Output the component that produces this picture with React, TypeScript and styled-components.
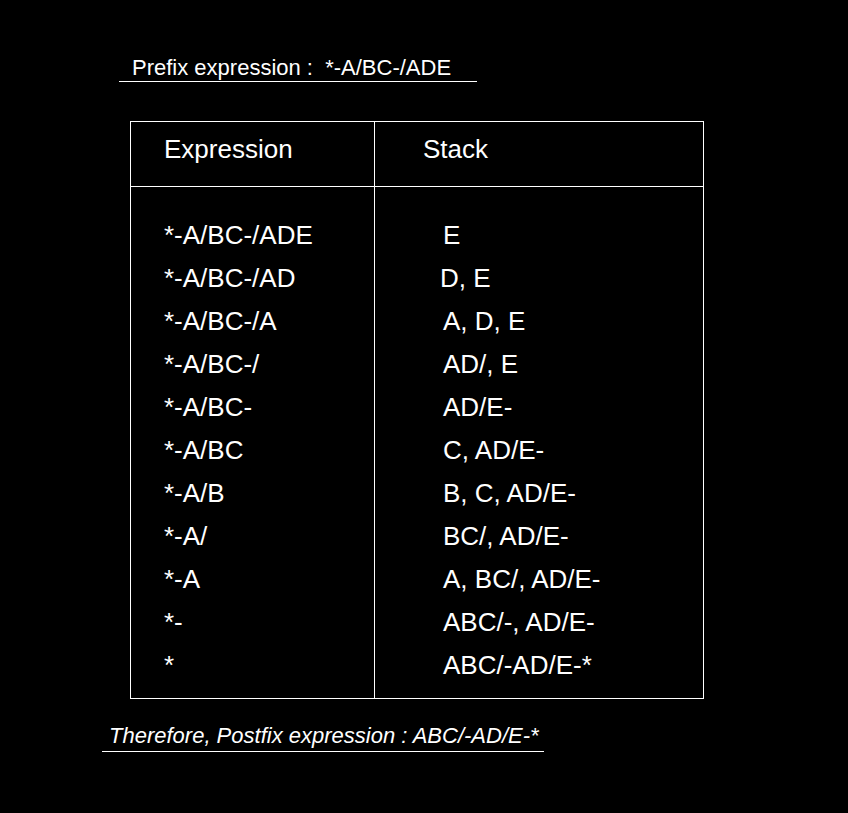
import React from "react";
import styled, { createGlobalStyle } from "styled-components";

const GlobalStyle = createGlobalStyle`
  html, body {
    margin: 0;
    padding: 0;
    background: #000;
  }
  body {
    font-family: "Liberation Sans", Arial, sans-serif;
    color: #fff;
  }
`;

const expressions = [
  "*-A/BC-/ADE",
  "*-A/BC-/AD",
  "*-A/BC-/A",
  "*-A/BC-/",
  "*-A/BC-",
  "*-A/BC",
  "*-A/B",
  "*-A/",
  "*-A",
  "*-",
  "*",
];

const stack = [
  "E",
  "D, E",
  "A, D, E",
  "AD/, E",
  "AD/E-",
  "C, AD/E-",
  "B, C, AD/E-",
  "BC/, AD/E-",
  "A, BC/, AD/E-",
  "ABC/-, AD/E-",
  "ABC/-AD/E-*",
];

const App = () => {
  return (
    <Page>
      <GlobalStyle />
      <Title>{"Prefix expression :  *-A/BC-/ADE"}</Title>
      <Table>
        <HeadCell pad={33} divider>
          Expression
        </HeadCell>
        <HeadCell pad={48}>Stack</HeadCell>
        <BodyCell divider>
          {expressions.map((e) => (
            <Item key={e} pad={33}>
              {e}
            </Item>
          ))}
        </BodyCell>
        <BodyCell>
          {stack.map((s, i) => (
            <Item key={s} pad={i === 1 ? 65 : 68}>
              {s}
            </Item>
          ))}
        </BodyCell>
      </Table>
      <Result>Therefore, Postfix expression : ABC/-AD/E-*</Result>
    </Page>
  );
};

export default App;

const Page = styled.div({
  width: "848px",
  height: "813px",
  background: "#000",
  boxSizing: "border-box",
  paddingTop: "55px",
  display: "flex",
  flexDirection: "column",
  alignItems: "flex-start",
});

const Title = styled.div({
  marginLeft: "119px",
  width: "358px",
  boxSizing: "border-box",
  paddingLeft: "13px",
  fontSize: "22px",
  lineHeight: "26px",
  whiteSpace: "pre",
  borderBottom: "1px solid #fff",
});

const Table = styled.div({
  marginTop: "39px",
  marginLeft: "130px",
  display: "grid",
  gridTemplateColumns: "244px 328px",
  border: "1px solid #fff",
});

const HeadCell = styled.div<{ pad: number; divider?: boolean }>`
  height: 65px;
  box-sizing: border-box;
  padding-top: 10px;
  padding-left: ${(p) => p.pad}px;
  font-size: 26px;
  line-height: 34px;
  border-bottom: 1px solid #fff;
  border-right: ${(p) => (p.divider ? "1px solid #fff" : "none")};
`;

const BodyCell = styled.div<{ divider?: boolean }>`
  display: flex;
  flex-direction: column;
  padding-top: 27px;
  padding-bottom: 11px;
  border-right: ${(p) => (p.divider ? "1px solid #fff" : "none")};
`;

const Item = styled.div<{ pad: number }>`
  padding-left: ${(p) => p.pad}px;
  font-size: 26px;
  line-height: 43px;
  white-space: pre;
`;

const Result = styled.div({
  marginTop: "24px",
  marginLeft: "102px",
  width: "442px",
  boxSizing: "border-box",
  paddingLeft: "7px",
  paddingBottom: "2px",
  fontSize: "22px",
  lineHeight: "26px",
  fontStyle: "italic",
  whiteSpace: "pre",
  borderBottom: "1px solid #fff",
});
